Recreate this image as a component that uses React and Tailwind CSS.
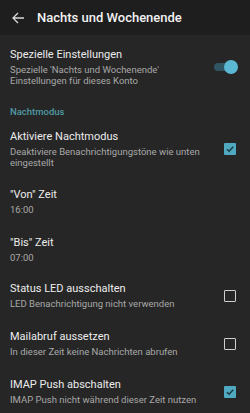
import React from 'react';

const font = { fontFamily: 'Roboto, "Noto Sans", sans-serif' };

const Checkbox = ({ checked }) => (
    checked ? (
        <div className="w-[12px] h-[12px] rounded-[1px] bg-[#4fa9c0] flex items-center justify-center">
            <svg width="10" height="10" viewBox="0 0 10 10">
                <path d="M2 5.2 L4.1 7.2 L8.2 2.8" fill="none" stroke="#1d3b44" strokeWidth="1.5" />
            </svg>
        </div>
    ) : (
        <div className="w-[12px] h-[12px] rounded-[1px] border-[1.5px] border-[#cfcfcf]" />
    )
);

const Toggle = () => (
    <div className="relative w-[22px] h-[14px] flex items-center">
        <div className="w-[18px] h-[8px] rounded-full bg-[#2e5561]" />
        <div className="absolute right-[-2px] top-0 w-[14px] h-[14px] rounded-full bg-[#5cb7d2]" />
    </div>
);

const Row = ({ title, sub, right, className = '' }) => (
    <div className={`flex items-center pl-[10px] pr-[14px] ${className}`}>
        <div className="flex-1 min-w-0">
            <div className="text-[11px] leading-[14px] text-[#ececec]">{title}</div>
            {sub && <div className="text-[9.5px] leading-[11px] text-[#a8a8a8] mt-[2px]">{sub}</div>}
        </div>
        {right && <div className="ml-2">{right}</div>}
    </div>
);

export default function App() {
    return (
        <div className="w-[250px] h-[413px] bg-[#262626] overflow-hidden" style={font}>
            <div className="h-[35px] bg-[#1e1e1e] flex items-center">
                <svg className="ml-[11px]" width="14" height="14" viewBox="0 0 14 14">
                    <path d="M13 7 H2 M7 2 L2 7 L7 12" fill="none" stroke="#d8d8d8" strokeWidth="1.3" />
                </svg>
                <div className="ml-[12px] text-[13px] font-medium text-[#f2f2f2]">Nachts und Wochenende</div>
            </div>

            <Row
                className="pt-[13px]"
                title="Spezielle Einstellungen"
                sub={<>Spezielle 'Nachts und Wochenende'<br />Einstellungen für dieses Konto</>}
                right={<Toggle />}
            />

            <div className="pl-[10px] pt-[20px] text-[9.5px] leading-[12px] font-medium text-[#4f9aa3]">Nachtmodus</div>

            <Row
                className="pt-[12px]"
                title="Aktiviere Nachtmodus"
                sub={<>Deaktiviere Benachrichtigungstöne wie unten<br />eingestellt</>}
                right={<Checkbox checked />}
            />

            <Row className="pt-[20px]" title={'"Von" Zeit'} sub="16:00" />
            <Row className="pt-[21px]" title={'"Bis" Zeit'} sub="07:00" />
            <Row className="pt-[19px]" title="Status LED ausschalten" sub="LED Benachrichtigung nicht verwenden" right={<Checkbox />} />
            <Row className="pt-[21px]" title="Mailabruf aussetzen" sub="In dieser Zeit keine Nachrichten abrufen" right={<Checkbox />} />
            <Row className="pt-[21px]" title="IMAP Push abschalten" sub="IMAP Push nicht während dieser Zeit nutzen" right={<Checkbox checked />} />
        </div>
    );
}
